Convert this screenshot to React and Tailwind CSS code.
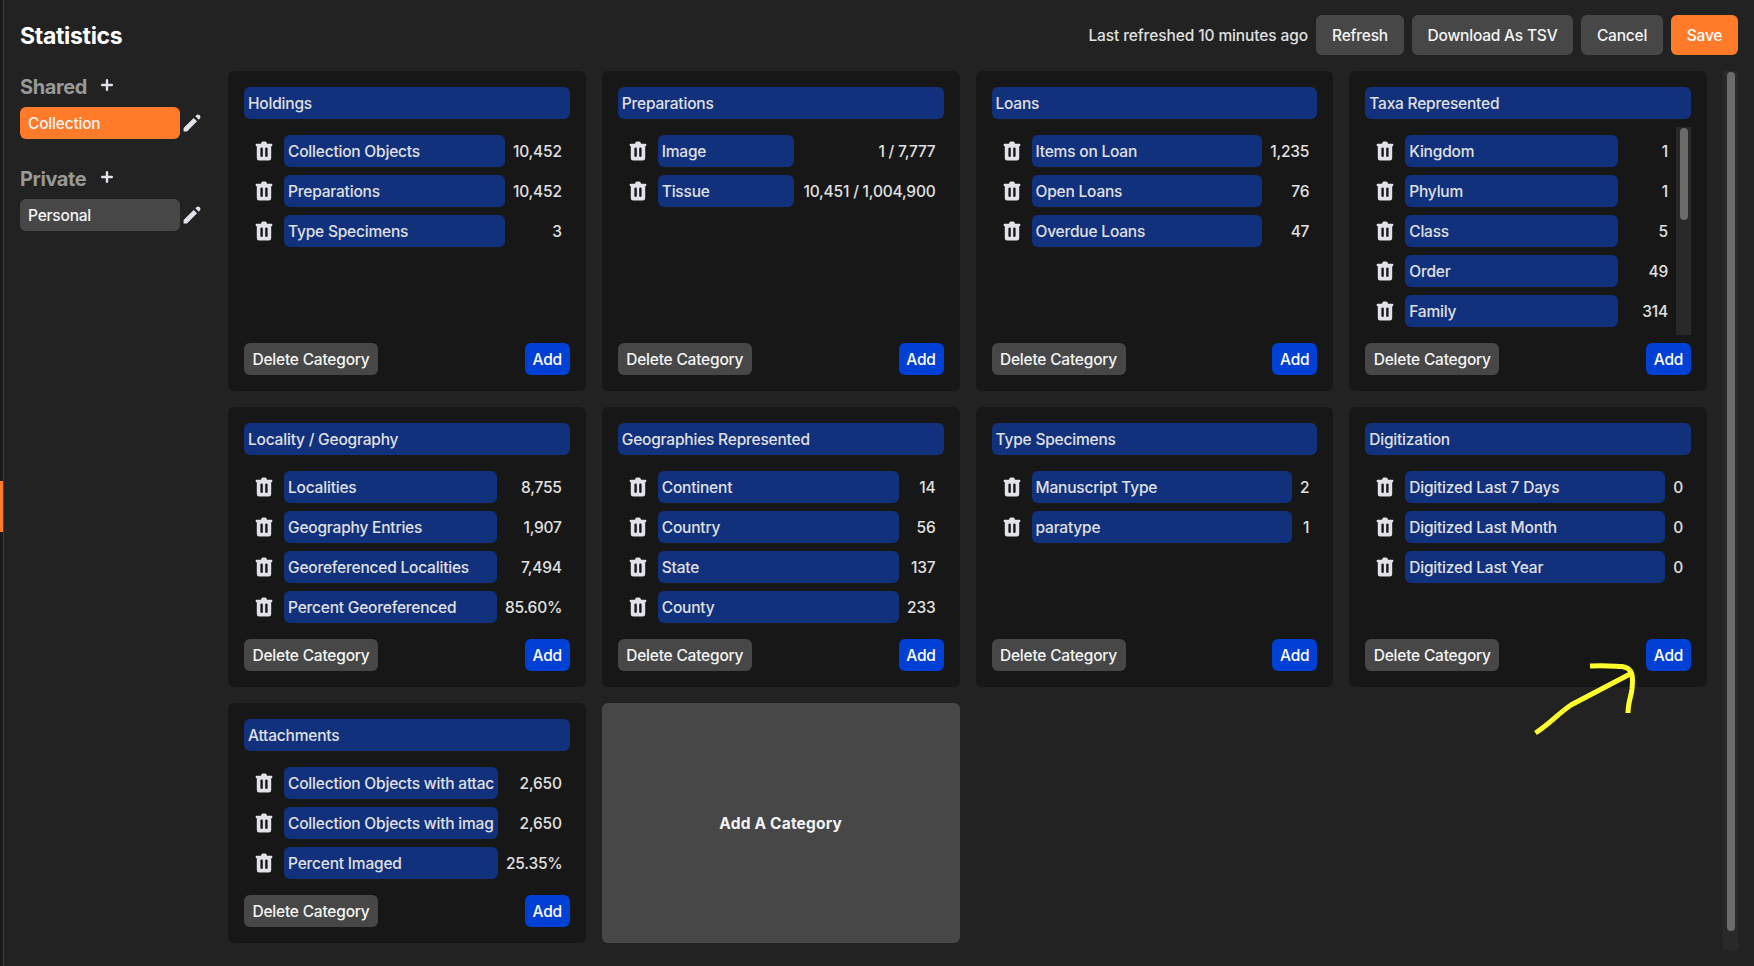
import React from 'react';

const categories = [
  { title: 'Holdings', cols: 'grid-cols-[24px_221px_1fr]', stats: [['Collection Objects', '10,452'], ['Preparations', '10,452'], ['Type Specimens', '3']] },
  { title: 'Preparations', cols: 'grid-cols-[24px_136px_1fr]', stats: [['Image', '1 / 7,777'], ['Tissue', '10,451 / 1,004,900']] },
  { title: 'Loans', cols: 'grid-cols-[24px_230px_1fr]', stats: [['Items on Loan', '1,235'], ['Open Loans', '76'], ['Overdue Loans', '47']] },
  { title: 'Taxa Represented', cols: 'grid-cols-[24px_213px_1fr]', scroll: true, stats: [['Kingdom', '1'], ['Phylum', '1'], ['Class', '5'], ['Order', '49'], ['Family', '314']] },
  { title: 'Locality / Geography', cols: 'grid-cols-[24px_213px_1fr]', stats: [['Localities', '8,755'], ['Geography Entries', '1,907'], ['Georeferenced Localities', '7,494'], ['Percent Georeferenced', '85.60%']] },
  { title: 'Geographies Represented', cols: 'grid-cols-[24px_241px_1fr]', stats: [['Continent', '14'], ['Country', '56'], ['State', '137'], ['County', '233']] },
  { title: 'Type Specimens', cols: 'grid-cols-[24px_260px_1fr]', stats: [['Manuscript Type', '2'], ['paratype', '1']] },
  { title: 'Digitization', cols: 'grid-cols-[24px_260px_1fr]', stats: [['Digitized Last 7 Days', '0'], ['Digitized Last Month', '0'], ['Digitized Last Year', '0']] },
  { title: 'Attachments', cols: 'grid-cols-[24px_214px_1fr]', stats: [['Collection Objects with attachments', '2,650'], ['Collection Objects with images', '2,650'], ['Percent Imaged', '25.35%']] },
];

function TrashIcon() {
  return (
    <svg viewBox="0 0 20 20" className="size-6 fill-[#e2e2ea]">
      <path
        fillRule="evenodd"
        clipRule="evenodd"
        d="M9 2a1 1 0 00-.894.553L7.382 4H4a1 1 0 000 2v10a2 2 0 002 2h8a2 2 0 002-2V6a1 1 0 100-2h-3.382l-.724-1.447A1 1 0 0011 2H9zM7 8a1 1 0 012 0v6a1 1 0 11-2 0V8zm5-1a1 1 0 00-1 1v6a1 1 0 102 0V8a1 1 0 00-1-1z"
      />
    </svg>
  );
}

function PencilIcon() {
  return (
    <svg viewBox="0 0 20 20" className="size-6 fill-[#e2e2ea]">
      <path d="M13.586 3.586a2 2 0 112.828 2.828l-.793.793-2.828-2.828.793-.793zM11.379 5.793L3 14.172V17h2.828l8.38-8.379-2.83-2.828z" />
    </svg>
  );
}

function PlusIcon() {
  return (
    <svg viewBox="0 0 20 20" className="mb-0.5 size-6 fill-[#e2e2ea]">
      <path d="M10 5a1 1 0 011 1v3h3a1 1 0 110 2h-3v3a1 1 0 11-2 0v-3H6a1 1 0 110-2h3V6a1 1 0 011-1z" />
    </svg>
  );
}

function StatRow({ cols, name, value }) {
  return (
    <div className={`grid h-8 items-center gap-2 ${cols}`}>
      <button aria-label="Remove">
        <TrashIcon />
      </button>
      <div className="h-8 rounded-md bg-[#11317d] px-1 pt-px leading-[31px]">
        <div className="overflow-hidden whitespace-nowrap">{name}</div>
      </div>
      <span className="whitespace-nowrap pt-px text-right">{value}</span>
    </div>
  );
}

function Category({ title, cols, stats, scroll }) {
  return (
    <section className="flex min-h-0 min-w-0 flex-col gap-2 rounded-md bg-[#171717] p-4">
      <div className="h-8 shrink-0 rounded-md bg-[#11317d] px-1 pt-px leading-[31px]">{title}</div>
      <div className="flex min-h-0 flex-1">
        <div className="flex min-w-0 flex-1 flex-col gap-2 p-2">
          {stats.map(([name, value]) => (
            <StatRow key={name} cols={cols} name={name} value={value} />
          ))}
        </div>
        {scroll && (
          <div className="flex w-[15px] justify-center bg-[#292929] pt-px">
            <div className="h-[92px] w-2 rounded-full bg-[#6b6b6b]" />
          </div>
        )}
      </div>
      <div className="flex shrink-0 justify-between">
        <button className="h-8 w-[134px] whitespace-nowrap rounded-md bg-[#474747] pt-px text-[#f5f5f5]">Delete Category</button>
        <button className="h-8 w-[45px] rounded-md bg-[#0040d4] pt-px text-white">Add</button>
      </div>
    </section>
  );
}

function Group({ label, item, active }) {
  return (
    <div className="flex flex-col">
      <div className="flex h-[30px] items-center gap-2 text-[20px] font-bold tracking-[-0.02em] text-[#999999]">
        <span className="w-[67px] pt-px">{label}</span>
        <PlusIcon />
      </div>
      <div className="mt-1.5 flex items-center">
        <button className={`h-8 w-40 rounded-md px-2 pt-px text-left text-[#f5f5f5] ${active ? 'bg-[#ff7a29]' : 'bg-[#474747]'}`}>{item}</button>
        <PencilIcon />
      </div>
    </div>
  );
}

export default function App() {
  return (
    <div className="relative flex h-[966px] w-[1754px] overflow-hidden bg-[#222222] font-['Inter',sans-serif] text-[15.5px] font-[450] tracking-[-0.013em] text-[#e0e0e0]">
      <div className="flex w-1 shrink-0 flex-col border-r border-[#404040] bg-[#1a1a1a] pt-[481px]">
        <div className="h-[51px] bg-[#ff7a29]" />
      </div>
      <div className="flex flex-1 flex-col pl-4 pr-4">
        <header className="flex h-[71px] items-center gap-2 pb-px">
          <h1 className="mr-auto pt-[3px] text-[23px] font-bold tracking-[-0.014em] text-white">Statistics</h1>
          <span className="pt-px tracking-[-0.007em]">Last refreshed 10 minutes ago</span>
          <button className="h-10 w-[88px] rounded-md bg-[#474747] pt-px text-[#f5f5f5]">Refresh</button>
          <button className="h-10 w-[161px] whitespace-nowrap rounded-md bg-[#474747] pt-px text-[#f5f5f5]">Download As TSV</button>
          <button className="h-10 w-[82px] rounded-md bg-[#474747] pt-px text-[#f5f5f5]">Cancel</button>
          <button className="h-10 w-[67px] rounded-md bg-[#ff7a29] pt-px text-white">Save</button>
        </header>
        <div className="flex h-[879px]">
          <aside className="flex w-[208px] shrink-0 flex-col gap-6">
            <Group label="Shared" item="Collection" active />
            <Group label="Private" item="Personal" />
          </aside>
          <main className="grid flex-1 grid-cols-4 grid-rows-[320px_280px_240px] content-start gap-4">
            {categories.map((category) => (
              <Category key={category.title} {...category} />
            ))}
            <button className="rounded-md bg-[#474747] pt-px font-bold tracking-[0.012em] text-[#f5f5fa]">Add A Category</button>
          </main>
          <div className="ml-4 flex w-[15px] justify-center bg-[#292929] pt-px">
            <div className="h-[859px] w-2 rounded-full bg-[#6b6b6b]" />
          </div>
        </div>
      </div>
      <svg viewBox="0 0 110 80" className="pointer-events-none absolute left-[1530px] top-[660px] h-20 w-[110px] fill-none stroke-[#ffff2e] stroke-[5]">
        <path d="M5.500 73C20 64 30 52 41 45L102 13" />
        <path d="M60 6C74 5 82 6 92 6.500C104 8 103 18 102 29C101 37 98 43 98 53" />
      </svg>
    </div>
  );
}
